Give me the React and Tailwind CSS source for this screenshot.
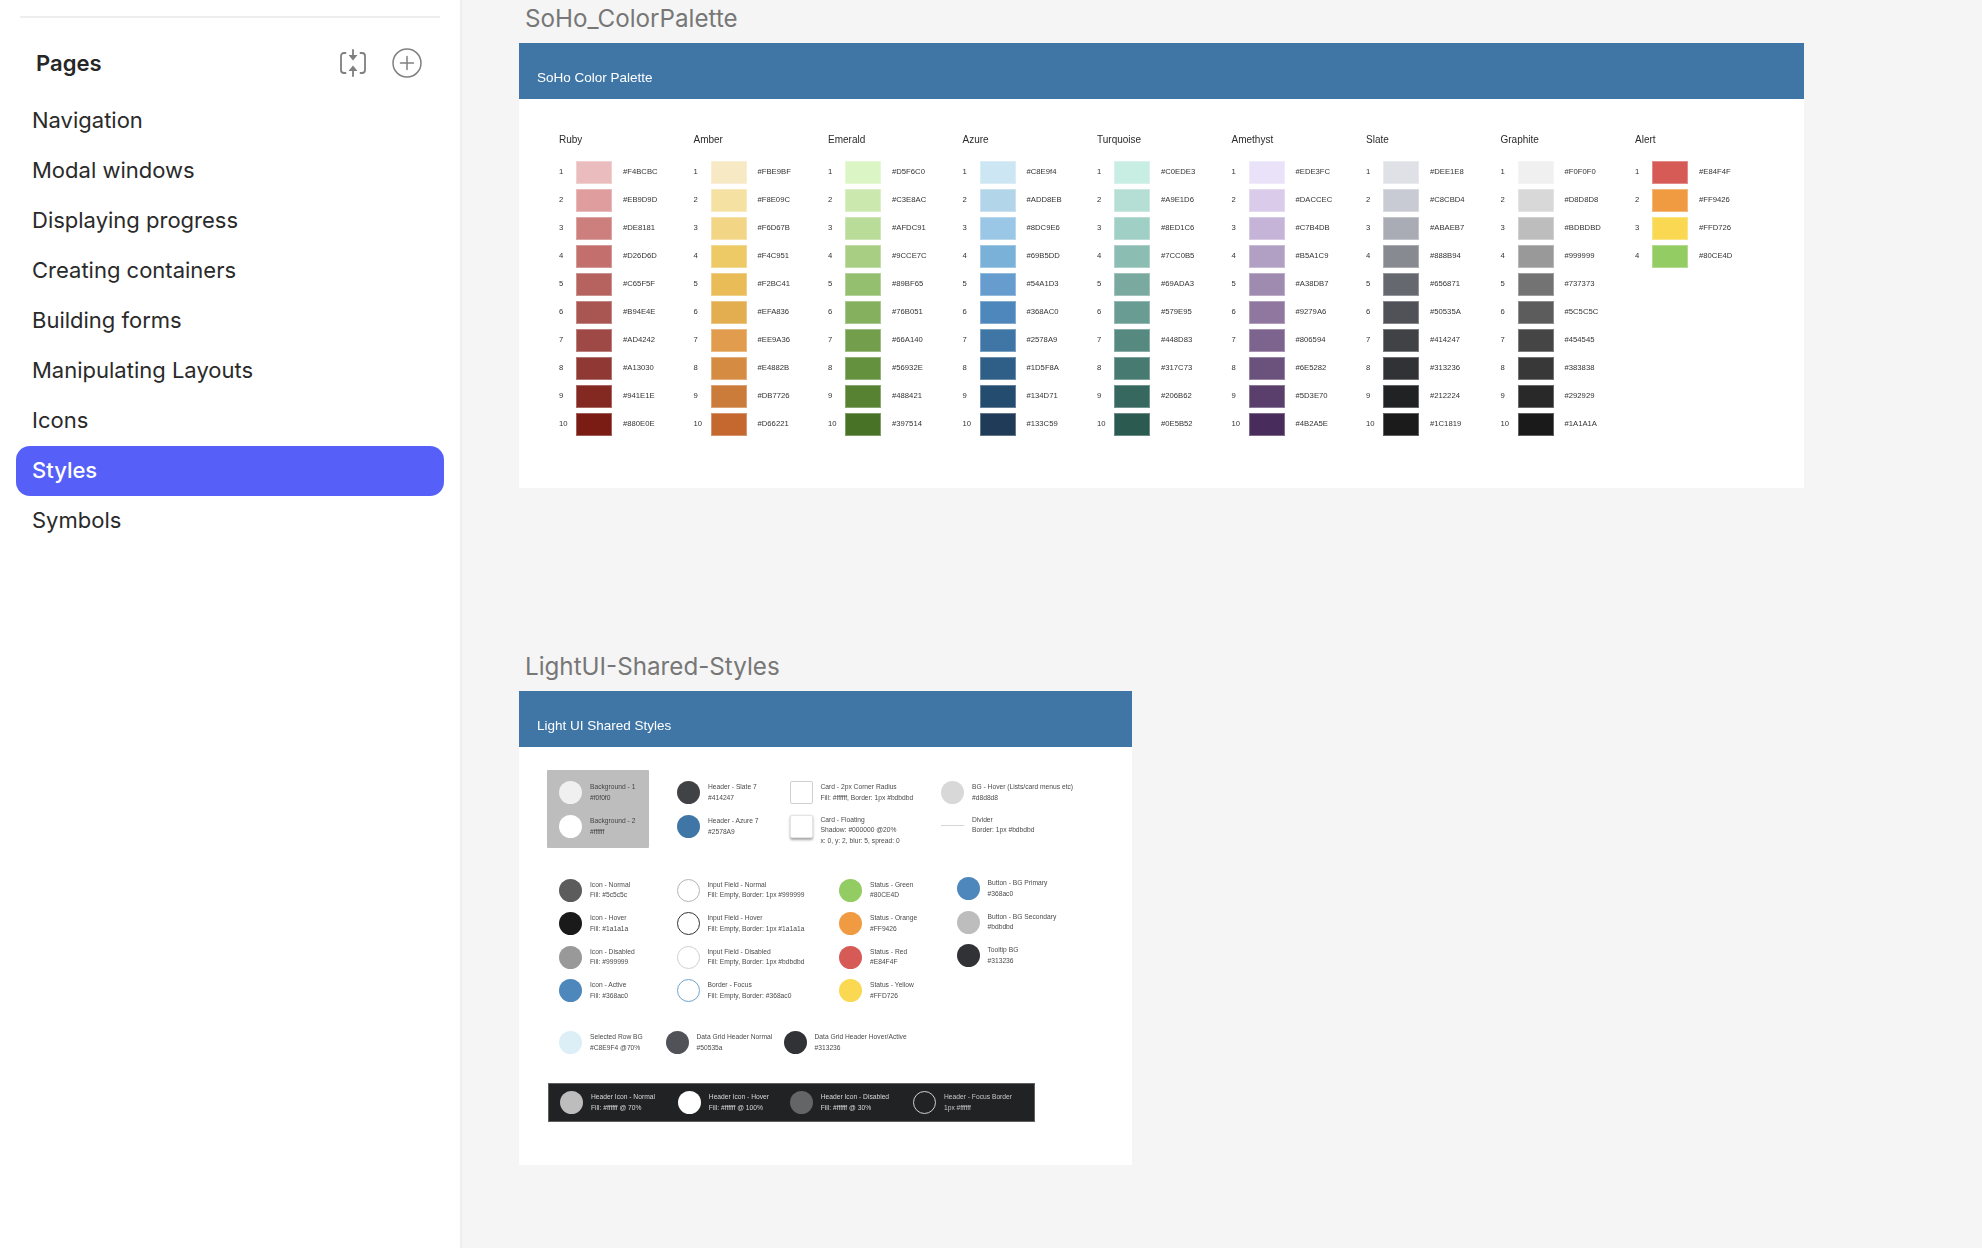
const pages = [
  "Navigation",
  "Modal windows",
  "Displaying progress",
  "Creating containers",
  "Building forms",
  "Manipulating Layouts",
  "Icons",
  "Styles",
  "Symbols",
];

const palette = [
  {
    name: "Ruby",
    rows: [
      ["#F4BCBC", "bg-[#ebbcbd]"],
      ["#EB9D9D", "bg-[#e09d9e]"],
      ["#DE8181", "bg-[#cd7f7e]"],
      ["#D26D6D", "bg-[#c26f6d]"],
      ["#C65F5F", "bg-[#b6635f]"],
      ["#B94E4E", "bg-[#a95552]"],
      ["#AD4242", "bg-[#9e4946]"],
      ["#A13030", "bg-[#8f3834]"],
      ["#941E1E", "bg-[#842822]"],
      ["#880E0E", "bg-[#7a1b14]"],
    ],
  },
  {
    name: "Amber",
    rows: [
      ["#FBE9BF", "bg-[#f7e9c4]"],
      ["#F8E09C", "bg-[#f5e1a1]"],
      ["#F6D67B", "bg-[#f2d686]"],
      ["#F4C951", "bg-[#edca66]"],
      ["#F2BC41", "bg-[#e9bc57]"],
      ["#EFA836", "bg-[#e3ae4f]"],
      ["#EE9A36", "bg-[#e19d4d]"],
      ["#E4882B", "bg-[#d68b42]"],
      ["#DB7726", "bg-[#cb7b3a]"],
      ["#D66221", "bg-[#c56830]"],
    ],
  },
  {
    name: "Emerald",
    rows: [
      ["#D5F6C0", "bg-[#dcf5c5]"],
      ["#C3E8AC", "bg-[#cbe8ae]"],
      ["#AFDC91", "bg-[#b9dc98]"],
      ["#9CCE7C", "bg-[#a7ce83]"],
      ["#89BF65", "bg-[#94bf6e]"],
      ["#76B051", "bg-[#85b05d]"],
      ["#66A140", "bg-[#739f4c]"],
      ["#56932E", "bg-[#64913e]"],
      ["#488421", "bg-[#568232]"],
      ["#397514", "bg-[#487326]"],
    ],
  },
  {
    name: "Azure",
    rows: [
      ["#C8E9f4", "bg-[#cde6f3]"],
      ["#ADD8EB", "bg-[#b3d5e9]"],
      ["#8DC9E6", "bg-[#9bc7e6]"],
      ["#69B5DD", "bg-[#79b1d9]"],
      ["#54A1D3", "bg-[#669dce]"],
      ["#368AC0", "bg-[#4d87bb]"],
      ["#2578A9", "bg-[#3f76a6]"],
      ["#1D5F8A", "bg-[#2f5e87]"],
      ["#134D71", "bg-[#244c6f]"],
      ["#133C59", "bg-[#203b58]"],
    ],
  },
  {
    name: "Turquoise",
    rows: [
      ["#C0EDE3", "bg-[#c8ede2]"],
      ["#A9E1D6", "bg-[#b5dfd5]"],
      ["#8ED1C6", "bg-[#9fcfc5]"],
      ["#7CC0B5", "bg-[#8cbdb2]"],
      ["#69ADA3", "bg-[#7aaa9f]"],
      ["#579E95", "bg-[#699c92]"],
      ["#448D83", "bg-[#568a80]"],
      ["#317C73", "bg-[#477a70]"],
      ["#206B62", "bg-[#37685f]"],
      ["#0E5B52", "bg-[#2b5a50]"],
    ],
  },
  {
    name: "Amethyst",
    rows: [
      ["#EDE3FC", "bg-[#e9e2f8]"],
      ["#DACCEC", "bg-[#d9cbe9]"],
      ["#C7B4DB", "bg-[#c5b3d8]"],
      ["#B5A1C9", "bg-[#b19fc4]"],
      ["#A38DB7", "bg-[#9f8bb0]"],
      ["#9279A6", "bg-[#8f77a0]"],
      ["#806594", "bg-[#7d648e]"],
      ["#6E5282", "bg-[#6b527c]"],
      ["#5D3E70", "bg-[#5a3f6c]"],
      ["#4B2A5E", "bg-[#482c5c]"],
    ],
  },
  {
    name: "Slate",
    rows: [
      ["#DEE1E8", "bg-[#e0e1e6]"],
      ["#C8CBD4", "bg-[#c8cbd3]"],
      ["#ABAEB7", "bg-[#a9acb4]"],
      ["#888B94", "bg-[#888a92]"],
      ["#656871", "bg-[#65686f]"],
      ["#50535A", "bg-[#505257]"],
      ["#414247", "bg-[#414246]"],
      ["#313236", "bg-[#313236]"],
      ["#212224", "bg-[#212224]"],
      ["#1C1819", "bg-[#1b1b1c]"],
    ],
  },
  {
    name: "Graphite",
    rows: [
      ["#F0F0F0", "bg-[#f0f0f0]"],
      ["#D8D8D8", "bg-[#d8d8d8]"],
      ["#BDBDBD", "bg-[#bdbdbd]"],
      ["#999999", "bg-[#999999]"],
      ["#737373", "bg-[#737373]"],
      ["#5C5C5C", "bg-[#5c5c5c]"],
      ["#454545", "bg-[#454545]"],
      ["#383838", "bg-[#383838]"],
      ["#292929", "bg-[#292929]"],
      ["#1A1A1A", "bg-[#1a1a1a]"],
    ],
  },
  {
    name: "Alert",
    rows: [
      ["#E84F4F", "bg-[#d65a56]"],
      ["#FF9426", "bg-[#f09a42]"],
      ["#FFD726", "bg-[#fad852]"],
      ["#80CE4D", "bg-[#93cc62]"],
    ],
  },
];

const iconStates = [
  ["Icon - Normal", "Fill: #5c5c5c", "bg-[#5c5c5c]"],
  ["Icon - Hover", "Fill: #1a1a1a", "bg-[#1a1a1a]"],
  ["Icon - Disabled", "Fill: #999999", "bg-[#999999]"],
  ["Icon - Active", "Fill: #368ac0", "bg-[#4d87bb]"],
];

const inputStates = [
  ["Input Field - Normal", "Fill: Empty, Border: 1px #999999", "border border-[#b5b5b5]"],
  ["Input Field - Hover", "Fill: Empty, Border: 1px #1a1a1a", "border border-[#333333]"],
  ["Input Field - Disabled", "Fill: Empty, Border: 1px #bdbdbd", "border border-[#d0d0d0]"],
  ["Border - Focus", "Fill: Empty, Border: #368ac0", "border border-[#6fa3cf]"],
];

const statusStates = [
  ["Status - Green", "#80CE4D", "bg-[#93cc62]"],
  ["Status - Orange", "#FF9426", "bg-[#f09a42]"],
  ["Status - Red", "#E84F4F", "bg-[#d65a56]"],
  ["Status - Yellow", "#FFD726", "bg-[#fad852]"],
];

const buttonStates = [
  ["Button - BG Primary", "#368ac0", "bg-[#4d87bb]"],
  ["Button - BG Secondary", "#bdbdbd", "bg-[#bdbdbd]"],
  ["Tooltip BG", "#313236", "bg-[#313236]"],
];

const Dot = ({ color }) => (
  <span className={`block w-[23px] h-[23px] shrink-0 rounded-full ${color}`} />
);

const Lines = ({ lines, className = "text-[#4a4a4a]" }) => (
  <div className={`ml-[8px] text-[6.7px] leading-[10.4px] whitespace-nowrap ${className}`}>
    {lines.map((line) => (
      <div key={line}>{line}</div>
    ))}
  </div>
);

const Legend = ({ title, sub, color, className }) => (
  <div className="flex items-center">
    <Dot color={color} />
    <Lines lines={[title, sub]} className={className} />
  </div>
);

const StatusColumn = ({ items, width, className = "" }) => (
  <div className={`flex flex-col gap-[10.5px] ${width} ${className}`}>
    {items.map(([title, sub, color]) => (
      <Legend key={title} title={title} sub={sub} color={color} />
    ))}
  </div>
);

const Panel = ({ title, className, children }) => (
  <section className={`bg-white blur-[0.3px] font-['Liberation_Sans',Arial,sans-serif] ${className}`}>
    <div className="h-[56px] bg-[#3f76a6] flex items-end pl-[18px] pb-[11px] text-[13.5px] leading-[20px] text-white">
      {title}
    </div>
    {children}
  </section>
);

const SortIcon = () => (
  <svg className="w-[28px] h-[28px]" viewBox="0 0 28 28" fill="none" stroke="#7f7f7f" strokeWidth="1.800" strokeLinecap="round">
    <path d="M6.500 4H5C3.200 4 2 5.200 2 7v14c0 1.800 1.200 3 3 3h1.500" />
    <path d="M21.500 4H23c1.800 0 3 1.200 3 3v14c0 1.800-1.200 3-3 3h-1.500" />
    <path d="M14 1v6M14 21v6" />
    <path d="M9.500 6h9L14 11.500zM9.500 22h9L14 16.500z" fill="#7f7f7f" stroke="none" />
  </svg>
);

const AddIcon = () => (
  <svg className="w-[30px] h-[30px]" viewBox="0 0 30 30" fill="none" stroke="#808080" strokeWidth="1.500" strokeLinecap="round">
    <circle cx="15" cy="15" r="14" />
    <path d="M15 8.500v13M8.500 15h13" />
  </svg>
);

const Sidebar = () => (
  <aside className="w-[460px] shrink-0 bg-white font-['Inter',sans-serif]">
    <div className="mt-[16px] mx-[20px] h-[2px] bg-[#eeeeee]" />
    <div className="mt-[30px] h-[30px] flex items-center pl-[36px] pr-[38px]">
      <h2 className="text-[22px] font-semibold text-[#262626]">Pages</h2>
      <div className="ml-auto mr-[25px]">
        <SortIcon />
      </div>
      <AddIcon />
    </div>
    <nav className="mt-[18px] mx-[16px]">
      {pages.map((page) => (
        <div
          key={page}
          className={`h-[50px] flex items-center pl-[16px] pb-[1.500px] rounded-[14px] text-[22px] ${
            page === "Styles" ? "bg-[#5660f8] text-white font-medium" : "text-[#2a2a2a]"
          }`}
        >
          {page}
        </div>
      ))}
    </nav>
  </aside>
);

const ColorPalette = () => (
  <Panel title="SoHo Color Palette" className="w-[1285px] h-[445px]">
    <div className="grid grid-cols-[repeat(9,134.5px)] pl-[40px] pt-[33.5px]">
      {palette.map((group) => (
        <div key={group.name}>
          <div className="h-[28px] text-[10px] leading-[14px] text-[#2b2b2b]">{group.name}</div>
          <div className="flex flex-col gap-[5px]">
            {group.rows.map(([hex, bg], i) => (
              <div key={hex} className="flex items-center h-[23px] text-[7.7px] text-[#333333]">
                <span className="w-[17px]">{i + 1}</span>
                <span className={`block w-[36px] h-[23px] border border-white/30 ${bg}`} />
                <span className="ml-[11px]">{hex}</span>
              </div>
            ))}
          </div>
        </div>
      ))}
    </div>
  </Panel>
);

const SharedStyles = () => (
  <Panel title="Light UI Shared Styles" className="w-[613px] h-[474px]">
    {/* Top row */}
    <div className="flex mt-[23px] ml-[28px] h-[78px]">
      <div className="w-[102px] bg-[#bdbdbd] flex flex-col gap-[11px] pl-[12px] pt-[11px] rounded-[1px]">
        <Legend title="Background - 1" sub="#f0f0f0" color="bg-[#f0f0f0]" className="text-[#444444]" />
        <Legend title="Background - 2" sub="#ffffff" color="bg-white" className="text-[#444444]" />
      </div>
      <div className="ml-[28px] w-[112.5px] flex flex-col gap-[11px] pt-[11px]">
        <Legend title="Header - Slate 7" sub="#414247" color="bg-[#414246]" />
        <Legend title="Header - Azure 7" sub="#2578A9" color="bg-[#3f76a6]" />
      </div>
      <div className="w-[151.5px] flex flex-col gap-[11px] pt-[11px]">
        <div className="flex items-center">
          <span className="block w-[23px] h-[23px] shrink-0 border border-[#cfcfcf] rounded-[2px]" />
          <Lines lines={["Card - 2px Corner Radius", "Fill: #ffffff, Border: 1px #bdbdbd"]} />
        </div>
        <div className="flex items-start">
          <span className="block w-[23px] h-[23px] shrink-0 bg-white rounded-[2px] border border-[#e4e4e4] shadow-[0_1.500px_2.500px_rgba(0,0,0,0.35)]" />
          <Lines lines={["Card - Floating", "Shadow: #000000 @20%", "x: 0, y: 2, blur: 5, spread: 0"]} />
        </div>
      </div>
      <div className="flex flex-col gap-[11px] pt-[11px]">
        <Legend title="BG - Hover (Lists/card menus etc)" sub="#d8d8d8" color="bg-[#d8d8d8]" />
        <div className="flex items-center">
          <span className="block w-[23px] h-[1px] shrink-0 bg-[#d5d5d5]" />
          <Lines lines={["Divider", "Border: 1px #bdbdbd"]} />
        </div>
      </div>
    </div>

    {/* State legends */}
    <div className="flex items-start mt-[30.500px] ml-[40px]">
      <StatusColumn items={iconStates} width="w-[117.5px]" />
      <StatusColumn items={inputStates} width="w-[162.5px]" />
      <StatusColumn items={statusStates} width="w-[117.5px]" />
      <StatusColumn items={buttonStates} width="w-[150px]" className="-mt-[1.5px]" />
    </div>

    {/* Data grid */}
    <div className="flex mt-[29px] ml-[40px]">
      <div className="w-[106.5px]">
        <Legend title="Selected Row BG" sub="#C8E9F4 @70%" color="bg-[#dceef6]" />
      </div>
      <div className="w-[118px]">
        <Legend title="Data Grid Header Normal" sub="#50535a" color="bg-[#505257]" />
      </div>
      <Legend title="Data Grid Header Hover/Active" sub="#313236" color="bg-[#313236]" />
    </div>

    {/* Dark header bar */}
    <div className="flex items-center mt-[29px] ml-[28.5px] w-[487px] h-[39px] pl-[11.500px] bg-[#212224] border border-[#8a8a8a]/60">
      <div className="w-[117.8px]">
        <Legend title="Header Icon - Normal" sub="Fill: #ffffff @ 70%" color="bg-[#bdbdbd]" className="text-[#d8d8d8]" />
      </div>
      <div className="w-[111.9px]">
        <Legend title="Header Icon - Hover" sub="Fill: #ffffff @ 100%" color="bg-white" className="text-[#d8d8d8]" />
      </div>
      <div className="w-[123.3px]">
        <Legend title="Header Icon - Disabled" sub="Fill: #ffffff @ 30%" color="bg-[#646567]" className="text-[#d8d8d8]" />
      </div>
      <Legend title="Header - Focus Border" sub="1px #ffffff" color="border border-[#d0d0d0]" className="text-[#c8c8c8]" />
    </div>
  </Panel>
);

const App = () => (
  <div className="h-[1248px] flex overflow-hidden bg-[#f5f5f5]">
    <Sidebar />
    <main className="flex-1 pl-[57px] border-l-2 border-[#eeeeee] font-['Inter',sans-serif]">
      <h2 className="pl-[6px] pt-[1px] pb-[6px] text-[24.2px] leading-[36px] text-[#777777]">SoHo_ColorPalette</h2>
      <ColorPalette />
      <h2 className="mt-[155px] pl-[6px] text-[24.2px] leading-[48px] text-[#777777]">LightUI-Shared-Styles</h2>
      <SharedStyles />
    </main>
  </div>
);

export default App;
